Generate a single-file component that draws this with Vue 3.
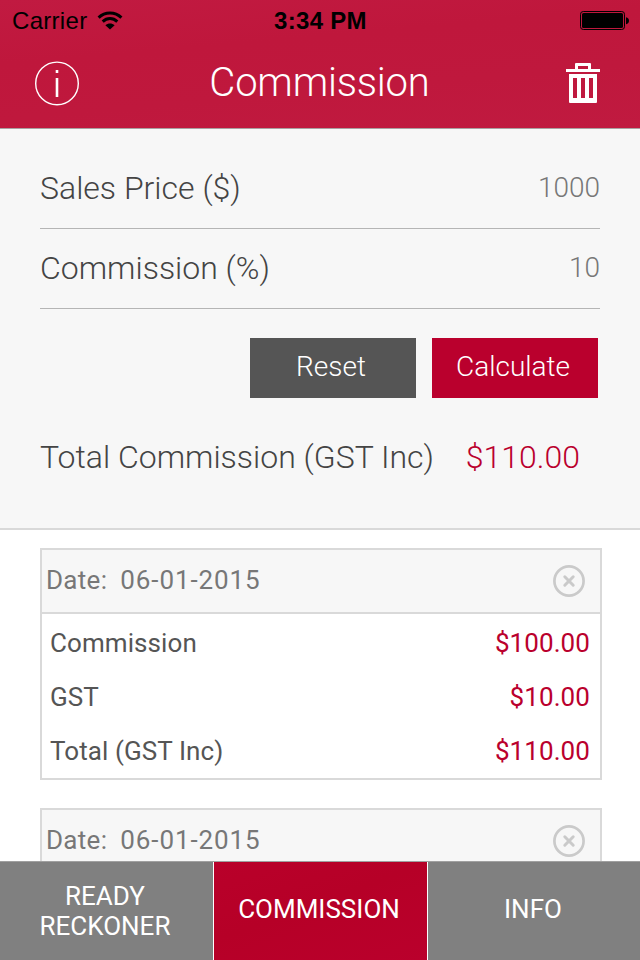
<template>
  <div class="screen">
    <header class="top">
      <div class="status">
        <div class="carrier">
          <span>Carrier</span>
          <svg class="wifi" width="26" height="19" viewBox="0 0 26 19">
            <path d="M1.6 6.6C8 .4 18 .4 24.4 6.6" fill="none" stroke="#000" stroke-width="3" />
            <path d="M5.7 10.6C10 6.6 16 6.6 20.3 10.6" fill="none" stroke="#000" stroke-width="3" />
            <path d="M8.4 14.2C11 11.8 15 11.8 17.6 14.2L13 18.6Z" />
          </svg>
        </div>
        <span class="time">3:34 PM</span>
        <svg class="battery" width="50" height="20" viewBox="0 0 50 20">
          <rect x=".5" y="1.5" width="44" height="18" rx="2.8" fill="none" stroke="#000" />
          <rect x="2" y="3" width="41" height="15" rx="1.6" />
          <path d="M46 7.2c4 .6 4 6.4 0 7Z" />
        </svg>
      </div>
      <div class="nav">
        <svg class="info" width="46" height="46" viewBox="0 0 46 46">
          <circle cx="23" cy="22.4" r="21.3" fill="none" stroke="#fff" stroke-width="1.4" />
          <path d="M21.7 9h2.6v3.1h-2.6zM21.7 17h2.6v19h-2.6z" fill="#fff" />
        </svg>
        <h1>Commission</h1>
        <svg class="trash" width="34" height="41" viewBox="0 0 34 41">
          <path fill="#fff" fill-rule="evenodd" d="M9 6V1q0-1 1-1h14q1 0 1 1v5h9v3H0V6zM12 3v3h10V3z" />
          <path fill="#fff" fill-rule="evenodd" d="M3 11h28v28q0 1-1 1H4q-1 0-1-1zM7 15v20h4V15zM15 15v20h4V15zM23 15v20h4V15z" />
        </svg>
      </div>
    </header>

    <section class="form">
      <div v-for="f in fields" :key="f.label" class="field">
        <span class="label">{{ f.label }}</span>
        <span class="value">{{ f.value }}</span>
      </div>
      <div class="actions">
        <button class="reset">Reset</button>
        <button class="calc">Calculate</button>
      </div>
      <div class="total">
        <span class="label">Total Commission (GST Inc)</span>
        <span class="sum">$110.00</span>
      </div>
    </section>

    <main class="history">
      <article v-for="(r, i) in records" :key="i" class="card">
        <div class="card-head">
          <div class="date">
            <span>Date:</span>
            <span class="day">{{ r.date }}</span>
          </div>
          <svg width="32" height="32" viewBox="0 0 32 32" fill="none" stroke="#cacaca">
            <circle cx="16" cy="16" r="14.6" stroke-width="2.7" />
            <path d="M11.8 11.8l8.4 8.4M20.2 11.8l-8.4 8.4" stroke-width="3" stroke-linecap="round" />
          </svg>
        </div>
        <div class="card-body">
          <div v-for="l in r.lines" :key="l[0]" class="line">
            <span>{{ l[0] }}</span>
            <span class="amount">{{ l[1] }}</span>
          </div>
        </div>
      </article>
    </main>

    <nav class="tabs">
      <div v-for="t in tabs" :key="t" class="tab" :class="{ active: t === current, tall: t.includes(' ') }" @click="current = t">
        <span v-for="word in t.split(' ')" :key="word">{{ word }}</span>
      </div>
    </nav>
  </div>
</template>

<script setup>
import { ref } from 'vue'

const fields = [
  { label: 'Sales Price ($)', value: '1000' },
  { label: 'Commission (%)', value: '10' }
]

const records = [
  {
    date: '06-01-2015',
    lines: [
      ['Commission', '$100.00'],
      ['GST', '$10.00'],
      ['Total (GST Inc)', '$110.00']
    ]
  },
  { date: '06-01-2015', lines: [] }
]

const tabs = ['READY RECKONER', 'COMMISSION', 'INFO']
const current = ref('COMMISSION')
</script>

<style>
body { margin: 0; overflow: hidden; }
</style>

<style scoped>
.screen {
  width: 640px; height: 960px; overflow: hidden; background: #fff;
  display: flex; flex-direction: column;
  font-family: Roboto, "Liberation Sans", sans-serif; color: #444;
}
.screen * { box-sizing: border-box; }
svg { display: block; flex: none; }

.top {
  flex: none; height: 129px; border-bottom: 1px solid #a9a0a1;
  background: linear-gradient(175deg, #c11a41 0%, #bf173c 35%, #bf183d 65%, #c01a40 100%);
}
.status {
  height: 40px; display: grid; grid-template-columns: 1fr auto 1fr; align-items: center;
  padding: 0 10px 0 12px; color: #000;
  font-family: "Liberation Sans", sans-serif; font-size: 24px; letter-spacing: .3px;
}
.status span { padding-top: 2px; }
.carrier { display: flex; align-items: center; gap: 10px; }
.time { font-weight: 700; margin-right: 1px; }
.battery { justify-self: end; }
.nav { height: 86px; display: flex; align-items: center; justify-content: space-between; padding: 0 40px 0 34px; }
.info { margin-top: 2px; }
h1 { margin: 0; font-size: 40px; font-weight: 300; line-height: 48px; color: #fff; padding-right: 7px; letter-spacing: -.2px; }

.form { flex: none; height: 401px; padding: 20px 40px 0; background: #f7f7f7; border-bottom: 2px solid #d9d9d9; }
.field {
  height: 80px; display: flex; justify-content: space-between; align-items: center;
  border-bottom: 1px solid #b5b5b5;
}
.label { font-size: 32px; font-weight: 300; padding-bottom: 2px; }
.value { font-size: 28px; font-weight: 300; color: #777; padding-bottom: 3px; }
.actions { display: flex; justify-content: flex-end; gap: 16px; padding: 29px 2px 0 0; }
.actions button {
  width: 166px; height: 60px; border: 0; padding: 0 4px 4px 0; color: #fff;
  font-family: inherit; font-size: 28px; font-weight: 300;
}
.reset { background: #555; }
.calc { background: #ba002d; }
.total { height: 120px; display: flex; justify-content: space-between; align-items: center; padding-right: 20px; }
.sum { font-size: 32px; font-weight: 300; color: #ba002d; padding-bottom: 2px; }

.history { flex: 1; min-height: 0; overflow: hidden; padding: 18px 38px 0 40px; }
.card { border: 2px solid #d9d9d9; margin-bottom: 28px; }
.card-head {
  height: 64px; display: flex; justify-content: space-between; align-items: center;
  padding: 0 15px 0 4px; background: #f7f7f7; border-bottom: 2px solid #d9d9d9;
}
.date { display: flex; gap: 13px; font-size: 26px; color: #777; letter-spacing: .3px; padding-bottom: 2px; }
.day { letter-spacing: .9px; }
.card-body { height: 164px; padding: 2px 10px 0 8px; }
.line { height: 54px; display: flex; justify-content: space-between; align-items: center; font-size: 26px; color: #555; letter-spacing: .08px; }
.amount { color: #ba002d; }

.tabs { flex: none; height: 99px; display: grid; grid-template-columns: 214px 214px 212px; border-top: 1px solid #a0a0a0; }
.tab {
  display: flex; flex-direction: column; align-items: center; justify-content: center;
  background: #808080; color: #fff; font-size: 26px; line-height: 30px; border-right: 1px solid #fff;
  padding: 0 2px 4px 0;
}
.tab:last-child { border-right: 0; }
.tab.tall { padding-bottom: 0; padding-right: 3px; }
.tab.active { background: linear-gradient(160deg, #b9002a, #b60027 45%, #ba002c); padding-right: 3px; }
</style>
